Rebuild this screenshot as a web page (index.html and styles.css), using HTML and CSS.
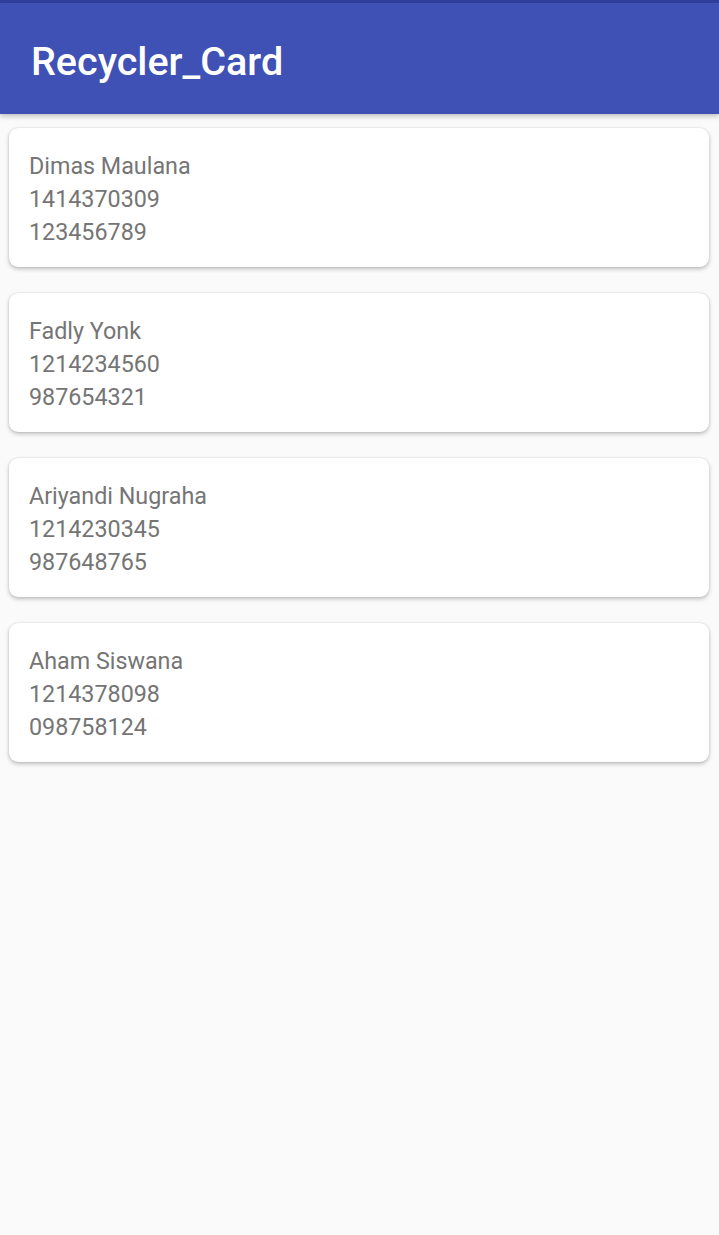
FILE: index.html
```html
<!DOCTYPE html>
<html>
<head>
<meta charset="utf-8">
<link rel="stylesheet" href="styles.css">
</head>
<body>
<div class="statusbar"></div>
<header class="appbar"><h1 class="title">Recycler_Card</h1></header>
<main class="list">
  <div class="card">
    <div class="line">Dimas Maulana</div>
    <div class="line">1414370309</div>
    <div class="line">123456789</div>
  </div>
  <div class="card">
    <div class="line">Fadly Yonk</div>
    <div class="line">1214234560</div>
    <div class="line">987654321</div>
  </div>
  <div class="card">
    <div class="line">Ariyandi Nugraha</div>
    <div class="line">1214230345</div>
    <div class="line">987648765</div>
  </div>
  <div class="card">
    <div class="line">Aham Siswana</div>
    <div class="line">1214378098</div>
    <div class="line">098758124</div>
  </div>
</main>
</body>
</html>
```
FILE: styles.css
```css
* { box-sizing: border-box; }
html, body { margin: 0; padding: 0; }
body {
  background: #fafafa;
  font-family: Roboto, "Liberation Sans", sans-serif;
  width: 719px;
  height: 1235px;
  overflow: hidden;
}
.statusbar {
  height: 3px;
  background: #303f9f;
}
.appbar {
  height: 111px;
  background: #3f51b5;
  display: flex;
  align-items: center;
  padding-left: 31px;
  box-shadow: 0 2px 5px rgba(0,0,0,0.25);
  position: relative;
  z-index: 1;
}
.title {
  margin: 0;
  color: #fff;
  font-size: 39.5px;
  font-weight: 500;
  padding-top: 5px;
}
.list {
  display: flex;
  flex-direction: column;
  gap: 26px;
  padding: 14px 10px 0 9px;
}
.card {
  background: #fff;
  border-radius: 9px;
  height: 139px;
  padding: 22px 20px 0 20px;
  box-shadow: 0 2px 4px rgba(0,0,0,0.24), 0 0 2px rgba(0,0,0,0.12);
}
.line {
  color: #757575;
  font-size: 23.3px;
  line-height: 33px;
}
```
